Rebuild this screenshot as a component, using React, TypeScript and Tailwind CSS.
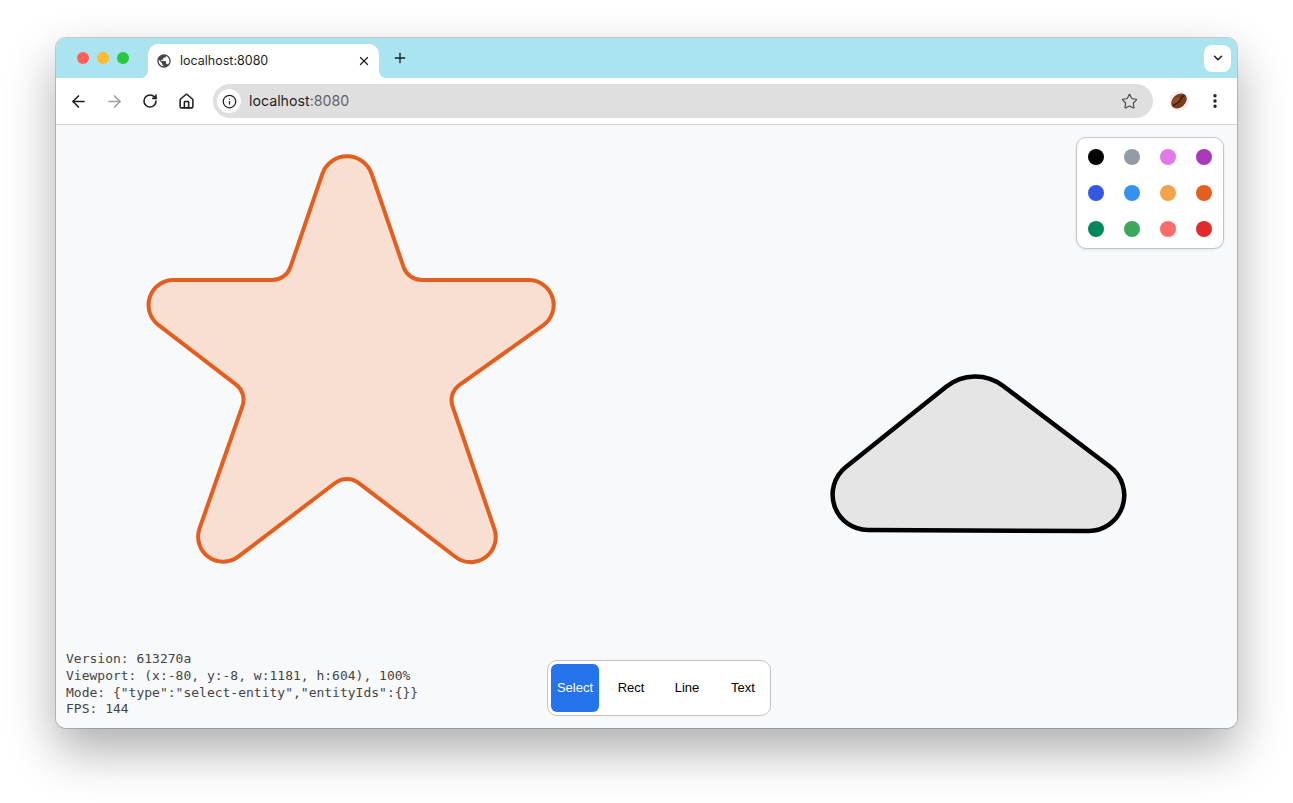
import { ArrowLeft, ArrowRight, RotateCw, House, Info, Star, EllipsisVertical, X, Plus, ChevronDown } from 'lucide-react';
import { MdPublic } from 'react-icons/md';

type Pt = [number, number];

// rounds every corner of a polygon with its own radius (like canvas arcTo)
function roundedPath(pts: Pt[], radii: number[]): string {
  const n = pts.length;
  let d = '';
  for (let i = 0; i < n; i++) {
    const p = pts[(i - 1 + n) % n];
    const v = pts[i];
    const q = pts[(i + 1) % n];
    const ax = p[0] - v[0], ay = p[1] - v[1];
    const bx = q[0] - v[0], by = q[1] - v[1];
    const la = Math.hypot(ax, ay), lb = Math.hypot(bx, by);
    const ua = [ax / la, ay / la], ub = [bx / lb, by / lb];
    const ang = Math.acos(ua[0] * ub[0] + ua[1] * ub[1]);
    const r = radii[i];
    const t = r / Math.tan(ang / 2);
    const s = [v[0] + ua[0] * t, v[1] + ua[1] * t];
    const e = [v[0] + ub[0] * t, v[1] + ub[1] * t];
    const sweep = ua[0] * ub[1] - ua[1] * ub[0] < 0 ? 1 : 0;
    d += `${i === 0 ? 'M' : 'L'}${s[0].toFixed(2)} ${s[1].toFixed(2)} A${r} ${r} 0 0 ${sweep} ${e[0].toFixed(2)} ${e[1].toFixed(2)} `;
  }
  return d + 'Z';
}

const starPts: Pt[] = [
  [347, 102], [408, 280], [607, 280], [448, 393], [521, 607],
  [347, 474], [172, 607], [247, 393], [100, 280], [286, 280],
];
const starRadii = [26, 19, 25, 19, 25, 19, 25, 19, 25, 19];

const trianglePts: Pt[] = [[974.4, 364.2], [1195.6, 531.5], [767.6, 529.5]];
const triangleRadii = [46, 35.7, 35.4];

const palette = [
  '#000000', '#939ba4', '#e07ae9', '#a93abb',
  '#3558e1', '#3592ec', '#f4a24b', '#e35f21',
  '#00875b', '#3ba85d', '#fe6b6b', '#e12b2b',
];

const tools = ['Select', 'Rect', 'Line', 'Text'];

function CoffeeBean() {
  return (
    <svg width="20" height="20" viewBox="0 0 20 20">
      <circle cx="10" cy="10" r="10" fill="#efefef" />
      <g transform="rotate(-40 10 10)">
        <ellipse cx="10" cy="10" rx="8.6" ry="6.4" fill="#7b3f1c" />
        <ellipse cx="8" cy="7.6" rx="4.5" ry="2" fill="#9a5a2e" opacity="0.7" />
        <path d="M1.8 10.4 C5 8.2, 8.5 12.6, 12 10 S16.5 8.8, 18.3 9.6" stroke="#3a1a08" strokeWidth="1.3" fill="none" />
      </g>
    </svg>
  );
}

function TabStrip() {
  return (
    <div className="h-10 bg-[#aae4f0] flex items-center shrink-0">
      <div className="flex items-center gap-2 pl-[21px]">
        <div className="w-3 h-3 rounded-full bg-[#ff5f57]" />
        <div className="w-3 h-3 rounded-full bg-[#febc2e]" />
        <div className="w-3 h-3 rounded-full bg-[#28c840]" />
      </div>
      <div className="relative self-end ml-[19px] h-[34px] w-[231px] bg-white rounded-t-[10px] flex items-center pl-2 pr-[7px]">
        <div className="absolute -left-2 bottom-0 w-2 h-2 bg-[radial-gradient(circle_at_0_0,transparent_8px,#ffffff_8.5px)]" />
        <div className="absolute -right-2 bottom-0 w-2 h-2 bg-[radial-gradient(circle_at_100%_0,transparent_8px,#ffffff_8.5px)]" />
        <MdPublic size={16} color="#474747" />
        <span className="ml-2 text-[12.5px] text-[#1f1f1f]">localhost:8080</span>
        <div className="ml-auto w-4 h-4 flex items-center justify-center">
          <X size={14} strokeWidth={2.2} color="#1f1f1f" />
        </div>
      </div>
      <div className="ml-[7px] w-7 h-7 flex items-center justify-center">
        <Plus size={16} strokeWidth={2} color="#1f1f1f" />
      </div>
      <div className="ml-auto mr-[6px] w-[27px] h-[27px] rounded-lg bg-white flex items-center justify-center">
        <ChevronDown size={14} strokeWidth={2.6} color="#1f1f1f" />
      </div>
    </div>
  );
}

function Toolbar() {
  return (
    <div className="h-[47px] bg-white border-b border-[#d3d3d3] flex items-center px-1 shrink-0">
      <div className="w-9 h-9 flex items-center justify-center">
        <ArrowLeft size={19} strokeWidth={2} color="#1f1f1f" />
      </div>
      <div className="w-9 h-9 flex items-center justify-center">
        <ArrowRight size={19} strokeWidth={2} color="#9e9e9e" />
      </div>
      <div className="w-9 h-9 flex items-center justify-center">
        <RotateCw size={16} strokeWidth={2.4} color="#1f1f1f" />
      </div>
      <div className="w-9 h-9 flex items-center justify-center">
        <House size={17} strokeWidth={2.2} color="#1f1f1f" />
      </div>
      <div className="ml-[9px] w-[940px] h-[34px] rounded-full bg-[#dfdfdf] flex items-center pl-1 pr-2">
        <div className="w-6 h-6 rounded-full bg-white flex items-center justify-center">
          <Info size={15} strokeWidth={2} color="#1f1f1f" />
        </div>
        <span className="ml-2 text-[14.2px]">
          <span className="text-[#1f1f1f]">localhost</span>
          <span className="text-[#5f6368]">:8080</span>
        </span>
        <div className="ml-auto w-8 h-8 flex items-center justify-center">
          <Star size={17} strokeWidth={1.6} color="#474747" />
        </div>
      </div>
      <div className="ml-2 w-9 h-9 flex items-center justify-center">
        <CoffeeBean />
      </div>
      <div className="w-9 h-9 flex items-center justify-center">
        <EllipsisVertical size={18} strokeWidth={2.6} color="#1f1f1f" />
      </div>
    </div>
  );
}

function Canvas() {
  return (
    <div className="relative flex-1 bg-[#f8f9fb] overflow-hidden">
      <svg className="block w-full h-full" viewBox="56 125 1181 603">
        <path d={roundedPath(starPts, starRadii)} fill="#f8dfd1" stroke="#e35f20" strokeWidth={4} />
        <path d={roundedPath(trianglePts, triangleRadii)} fill="#e5e5e5" stroke="#000000" strokeWidth={4.5} />
      </svg>

      {/* color palette */}
      <div className="absolute top-3 right-[13px] bg-white border border-[#c4c4c4] rounded-[10px] p-[11px] grid grid-cols-4 gap-5 shadow-[0_1px_3px_rgba(0,0,0,0.08)]">
        {palette.map((c) => (
          <div key={c} className="w-4 h-4 rounded-full" style={{ backgroundColor: c }} />
        ))}
      </div>

      {/* debug info */}
      <div className="absolute left-2.5 bottom-2.5 font-['DejaVu_Sans_Mono',monospace] text-[13px] leading-[16.67px] text-[#444444] whitespace-pre">
        <div>Version: 613270a</div>
        <div>Viewport: (x:-80, y:-8, w:1181, h:604), 100%</div>
        <div>{'Mode: {"type":"select-entity","entityIds":{}}'}</div>
        <div>FPS: 144</div>
      </div>

      {/* tools */}
      <div className="absolute left-[491px] bottom-3 bg-white border border-[#c4c4c4] rounded-[10px] p-[3px] flex gap-2 font-['Liberation_Sans',Arial,sans-serif] text-[13px]">
        {tools.map((t, i) => (
          <button
            key={t}
            className={`w-12 h-12 rounded-md flex items-center justify-center ${i === 0 ? 'bg-[#2673ee] text-white' : 'text-black'}`}
          >
            {t}
          </button>
        ))}
      </div>
    </div>
  );
}

export default function App() {
  return (
    <div className="w-[1293px] h-[803px] bg-white pl-[56px] pt-[38px] overflow-hidden font-['Inter',sans-serif]">
      <div className="w-[1181px] h-[690px] rounded-[10px] overflow-hidden flex flex-col bg-white shadow-[0_0_0_1px_rgba(0,0,0,0.18),0_22px_50px_rgba(0,0,0,0.33)]">
        <TabStrip />
        <Toolbar />
        <Canvas />
      </div>
    </div>
  );
}
